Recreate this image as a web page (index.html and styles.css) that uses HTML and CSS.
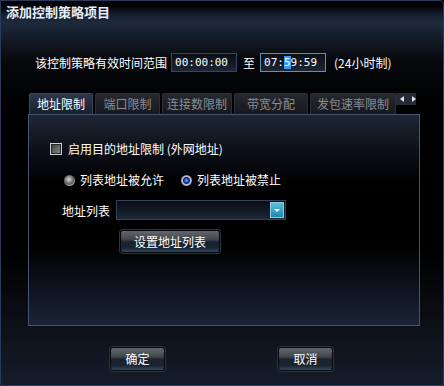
FILE: index.html
```html
<!DOCTYPE html>
<html lang="zh-CN">
<head>
    <meta charset="UTF-8">
    <title>添加控制策略项目</title>
    <link rel="stylesheet" href="styles.css">
</head>
<body>
    <div class="window">
        <div class="titlebar">添加控制策略项目</div>
        <div class="content">
            <div class="time-row">
                <span>该控制策略有效时间范围</span>
                <div class="time-box">00:00:00</div>
                <span class="to">至</span>
                <div class="time-box active">07:<span class="sel">5</span>9:59</div>
                <span class="hint">(24小时制)</span>
            </div>

            <div class="tabs">
                <div class="tab on w1">地址限制</div>
                <div class="tab w2">端口限制</div>
                <div class="tab w3">连接数限制</div>
                <div class="tab w4">带宽分配</div>
                <div class="tab w5">发包速率限制</div>
                <div class="tab-scroll">
                    <span class="arr left"></span>
                    <span class="arr right"></span>
                </div>
            </div>

            <div class="panel">
                <label class="check-row">
                    <span class="checkbox"></span>
                    启用目的地址限制 (外网地址)
                </label>
                <div class="radio-row">
                    <label class="radio-item"><span class="radio"></span>列表地址被允许</label>
                    <label class="radio-item"><span class="radio on"></span>列表地址被禁止</label>
                </div>
                <div class="list-row">
                    <span>地址列表</span>
                    <div class="select">
                        <span class="drop"><span class="chev"></span></span>
                    </div>
                </div>
                <button class="btn set-btn">设置地址列表</button>
            </div>

            <div class="actions">
                <button class="btn">确定</button>
                <button class="btn">取消</button>
            </div>
        </div>
    </div>
</body>
</html>
```

FILE: styles.css
```css
body {
    margin: 0;
    background: #000;
    font-family: "Noto Sans CJK SC", "DejaVu Sans", sans-serif;
    font-size: 12px;
    color: #fff;
}

.window {
    width: 444px;
    height: 386px;
    box-sizing: border-box;
    border: 1px solid #2a3a58;
    border-radius: 0 4px 0 0;
    background: linear-gradient(to bottom,
        #000 0, #03050a 6px, #172030 14px, #1e2a3c 22px, #161e2b 34px,
        #06080c 60px, #000 110px, #000 250px, #0b0f16 320px, #161d2a 384px);
    overflow: hidden;
}

.titlebar {
    height: 24px;
    line-height: 22px;
    padding-left: 5px;
    font-size: 13px;
    font-weight: bold;
    color: #e6eef8;
}

.content {
    padding: 0 27px;
}

.time-row {
    display: flex;
    align-items: center;
    height: 19px;
    margin: 28px 0 0 7px;
    line-height: 19px;
}

.time-box {
    width: 61px;
    height: 17px;
    margin-left: 4px;
    padding-left: 3px;
    border: 1px solid #37455e;
    background: linear-gradient(to bottom, #0a0e16, #1d2636);
    font-family: "DejaVu Sans Mono", monospace;
    font-size: 11px;
    line-height: 17px;
}

.time-box.active {
    border-color: #5f93a8;
}

.sel {
    background: #3399ff;
    color: #fff;
}

.to {
    margin-left: 6px;
    margin-right: 1px;
}

.hint {
    margin-left: 8px;
}

.tabs {
    display: flex;
    gap: 2px;
    height: 21px;
    margin-top: 21px;
    margin-left: 1px;
    overflow: hidden;
}

.tab {
    flex: none;
    box-sizing: border-box;
    height: 21px;
    line-height: 20px;
    text-align: center;
    border: 1px solid #2a2e36;
    border-bottom: none;
    border-radius: 2px 2px 0 0;
    background: linear-gradient(to bottom, #25292f, #16191e);
    color: #8a8e96;
}

.tab.on {
    border-color: #3a475e;
    background: linear-gradient(to bottom, #2c374a, #18202e);
    color: #fff;
}

.w1 { width: 64px; }
.w2 { width: 65px; }
.w3 { width: 70px; }
.w4 { width: 74px; }
.w5 { width: 86px; }

.tab-scroll {
    flex: none;
    display: flex;
    align-items: center;
    justify-content: space-around;
    width: 24px;
    height: 12px;
    margin-left: -2px;
    background: #242a36;
}

.arr {
    width: 0;
    height: 0;
    border-top: 3px solid transparent;
    border-bottom: 3px solid transparent;
}

.arr.left { border-right: 4px solid #e0e4ea; }
.arr.right { border-left: 4px solid #e0e4ea; }

.panel {
    box-sizing: border-box;
    width: 392px;
    height: 212px;
    padding: 28px 0 0 21px;
    border: 1px solid #46546e;
    background: linear-gradient(to bottom,
        #1e2636 0, #0a0d14 40px, #000 70px, #000 130px, #0d121b 170px, #1b2436 211px);
}

.check-row {
    display: flex;
    align-items: center;
    gap: 6px;
    height: 12px;
    line-height: 12px;
}

.checkbox {
    display: inline-block;
    box-sizing: border-box;
    width: 12px;
    height: 12px;
    border: 1px solid #cfcfcf;
    background: linear-gradient(135deg, #3c3c3c, #8e8e8e);
    box-shadow: inset 0 0 0 1px #262626;
}

.radio-row {
    display: flex;
    margin: 18px 0 0 14px;
    height: 14px;
    line-height: 14px;
}

.radio-item {
    display: flex;
    align-items: center;
    gap: 5px;
    width: 117px;
}

.radio {
    display: inline-block;
    width: 11px;
    height: 11px;
    border-radius: 50%;
    background: radial-gradient(circle at 45% 40%, #d8d8d8 0, #8a8a8a 3px, #5a5a5a 5px, #a0a0a0 6px);
}

.radio.on {
    background: radial-gradient(circle at 50% 50%, #6aa0ff 0, #1848e0 2px, #0a1a60 3px, #c8c8c8 4px, #707070 6px);
}

.list-row {
    display: flex;
    align-items: center;
    margin: 13px 0 0 12px;
    height: 20px;
}

.select {
    position: relative;
    box-sizing: border-box;
    width: 170px;
    height: 20px;
    margin-left: 6px;
    border: 1px solid #34425a;
    background: linear-gradient(to bottom, #080b12, #1e2838);
}

.drop {
    position: absolute;
    top: 1px;
    right: 1px;
    box-sizing: border-box;
    width: 14px;
    height: 16px;
    border: 1px solid #8ccfe4;
    background: linear-gradient(to bottom, #5cc0dc, #1a88ae);
    display: flex;
    align-items: center;
    justify-content: center;
}

.chev {
    width: 0;
    height: 0;
    border-left: 3px solid transparent;
    border-right: 3px solid transparent;
    border-top: 3px solid #fff;
}

.btn {
    box-sizing: border-box;
    width: 55px;
    height: 24px;
    padding: 0;
    border: 1px solid #05070a;
    border-radius: 3px;
    box-shadow: 0 0 0 1px #28344a;
    background: linear-gradient(to bottom,
        #62666c 0, #41464d 40%, #1b222d 52%, #1a2433 80%, #2c4c68 100%);
    color: #fff;
    font-family: inherit;
    font-size: 12px;
    line-height: 20px;
}

.set-btn {
    display: block;
    width: 100px;
    height: 23px;
    margin: 10px 0 0 70px;
}

.actions {
    display: flex;
    gap: 113px;
    margin: 21px 0 0 82px;
}
```
